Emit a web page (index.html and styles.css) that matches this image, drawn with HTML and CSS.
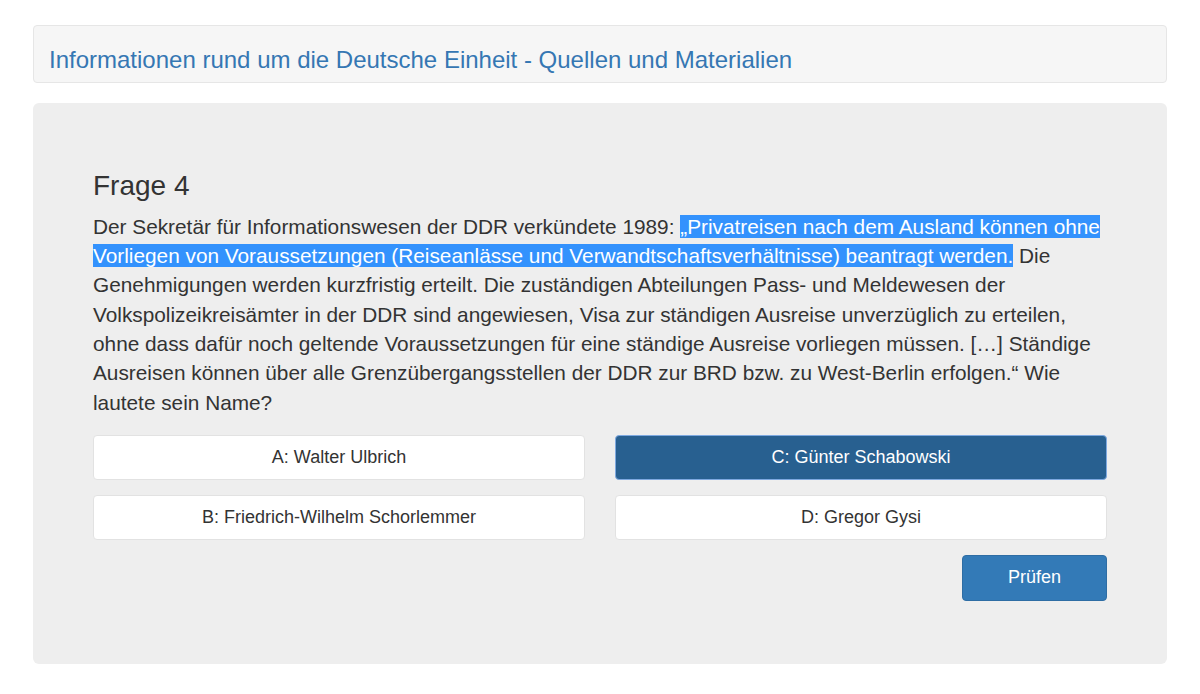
FILE: index.html
```html
<!DOCTYPE html>
<html lang="de">
<head>
<meta charset="utf-8">
<title>Frage 4</title>
<link rel="stylesheet" href="styles.css">
</head>
<body>
<div class="container">
  <div class="header-well">
    <h1 class="site-title">Informationen rund um die Deutsche Einheit - Quellen und Materialien</h1>
  </div>
  <div class="jumbotron">
    <h3 class="question-title">Frage 4</h3>
    <p class="question-text">Der Sekretär für Informationswesen der DDR verkündete 1989: <span class="sel">„Privatreisen nach dem Ausland können ohne Vorliegen von Voraussetzungen (Reiseanlässe und Verwandtschaftsverhältnisse) beantragt werden.</span> Die Genehmigungen werden kurzfristig erteilt. Die zuständigen Abteilungen Pass- und Meldewesen der Volkspolizeikreisämter in der DDR sind angewiesen, Visa zur ständigen Ausreise unverzüglich zu erteilen, ohne dass dafür noch geltende Voraussetzungen für eine ständige Ausreise vorliegen müssen. […] Ständige Ausreisen können über alle Grenzübergangsstellen der DDR zur BRD bzw. zu West-Berlin erfolgen.“ Wie lautete sein Name?</p>
    <div class="answers">
      <button class="answer">A: Walter Ulbrich</button>
      <button class="answer active">C: Günter Schabowski</button>
      <button class="answer">B: Friedrich-Wilhelm Schorlemmer</button>
      <button class="answer">D: Gregor Gysi</button>
    </div>
    <div class="actions">
      <button class="check">Prüfen</button>
    </div>
  </div>
</div>
</body>
</html>
```
FILE: styles.css
```css
html, body {
  margin: 0;
  padding: 0;
  background: #fff;
}
body {
  font-family: "Liberation Sans", Arial, sans-serif;
  color: #333;
  font-size: 16px;
}
.container {
  width: 1134px;
  margin: 0 auto;
  padding-top: 25px;
}
.header-well {
  background: #f6f6f6;
  border: 1px solid #e6e6e6;
  border-radius: 4px;
  padding: 12px 15px 0;
  height: 44px;
  display: flex;
  align-items: center;
}
.site-title {
  margin: 0;
  font-weight: normal;
  font-size: 24px;
  line-height: 1.1;
  color: #3577b3;
}
.jumbotron {
  margin-top: 20px;
  background: #eeeeee;
  border-radius: 6px;
  padding: 48px 60px 63px;
}
.question-title {
  margin: 20px 0 10px;
  font-size: 28px;
  font-weight: normal;
  line-height: 1.1;
  color: #333;
}
.question-text {
  margin: 0 0 18px;
  font-size: 20.8px;
  line-height: 29.3px;
  color: #333;
}
.sel {
  background: #3392fd;
  color: #fff;
}
.answers {
  display: grid;
  grid-template-columns: 1fr 1fr;
  column-gap: 30px;
  row-gap: 15px;
}
.answer {
  font-family: "Liberation Sans", Arial, sans-serif;
  font-size: 18px;
  height: 45px;
  background: #fff;
  color: #333;
  border: 1px solid #e2e2e2;
  border-radius: 4px;
  padding: 0 12px;
}
.answer.active {
  background: #286090;
  border-color: #7ea9e0;
  color: #fff;
}
.actions {
  display: flex;
  justify-content: flex-end;
  margin-top: 15px;
}
.check {
  font-family: "Liberation Sans", Arial, sans-serif;
  font-size: 18px;
  width: 145px;
  height: 46px;
  background: #337ab7;
  color: #fff;
  border: 1px solid #2e6da4;
  border-radius: 4px;
}
```
